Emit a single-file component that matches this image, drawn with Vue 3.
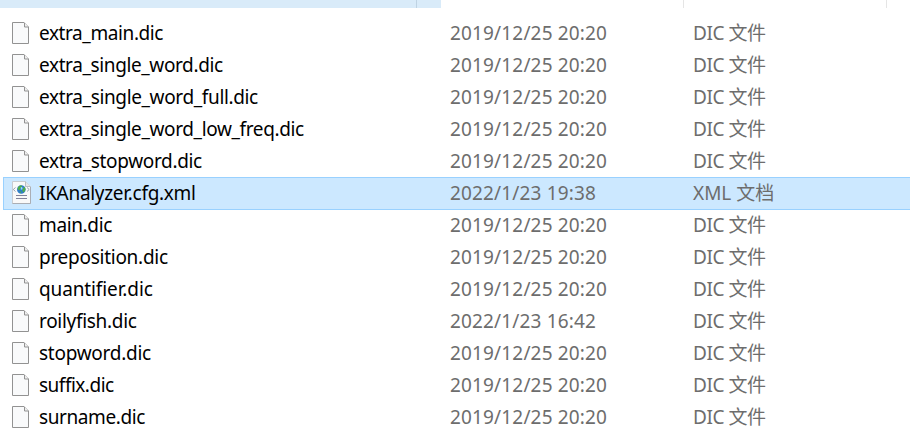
<script setup>
const dic = 'DIC 文件'
const stamp = '2019/12/25 20:20'
const files = [
  { name: 'extra_main.dic', date: stamp, type: dic, tracking: -0.4 },
  { name: 'extra_single_word.dic', date: stamp, type: dic, tracking: -0.38 },
  { name: 'extra_single_word_full.dic', date: stamp, type: dic, tracking: -0.36 },
  { name: 'extra_single_word_low_freq.dic', date: stamp, type: dic, tracking: -0.37 },
  { name: 'extra_stopword.dic', date: stamp, type: dic, tracking: -0.34 },
  { name: 'IKAnalyzer.cfg.xml', date: '2022/1/23 19:38', type: 'XML 文档', tracking: -0.3, selected: true },
  { name: 'main.dic', date: stamp, type: dic, tracking: -0.37 },
  { name: 'preposition.dic', date: stamp, type: dic, tracking: -0.27 },
  { name: 'quantifier.dic', date: stamp, type: dic, tracking: -0.12 },
  { name: 'roilyfish.dic', date: '2022/1/23 16:42', type: dic, tracking: -0.3 },
  { name: 'stopword.dic', date: stamp, type: dic, tracking: -0.27 },
  { name: 'suffix.dic', date: stamp, type: dic, tracking: -0.5 },
  { name: 'surname.dic', date: stamp, type: dic, tracking: -0.4 },
]
</script>

<template>
  <main class="explorer">
    <header class="columns">
      <span class="col-name"></span>
      <span class="col-gap"></span>
      <span class="col-date"></span>
      <span class="col-type"></span>
    </header>
    <ul class="files">
      <li v-for="f in files" :key="f.name" class="row" :class="{ selected: f.selected }">
        <svg v-if="f.selected" class="icon" width="21" height="25" viewBox="0 0 21 25">
          <path d="M1.500 1.500h13l5 5v17h-18z" fill="#f9f9f9" stroke="#c9ccd0" />
          <path d="M19.500 7v16.500h-18" fill="none" stroke="#abaeb4" />
          <path d="M14.500 1.500v5h5" fill="#e4e7ea" stroke="#bbbfc4" />
          <path d="M4.500 7.500 2.300 9.500l2.200 2M16 7.500l2.200 2-2.200 2" fill="none" stroke="#95a2b1" />
          <circle cx="10.300" cy="9.500" r="4.300" fill="#2f7dcc" />
          <path d="M6.800 7.500q1.500-2.200 3.500-2.200l.8 1.500-1.800 1.200-.5 2-2-.2zM12 8l2-1 .5 2.700-1.700 2.800-1.500-1.500zM8.300 11.300l2 .5-.5 1.600z" fill="#4fae48" />
          <path d="M9.800 7l1.500.3.200 2-1.700.5z" fill="#9adcf7" />
          <path d="M5 15.500h11M5 18.500h11" stroke="#82829a" />
        </svg>
        <svg v-else class="icon" width="20" height="24" viewBox="0 0 20 24">
          <path d="M2.500 1.500h11.500l4.500 4.500v16.500h-16z" fill="#f9fafb" stroke="#929292" />
          <path d="M14.500 1.800v4.200h4" fill="#efefef" stroke="#929292" />
        </svg>
        <span class="name" :style="{ letterSpacing: f.tracking + 'px' }">{{ f.name }}</span>
        <span class="date">{{ f.date }}</span>
        <span class="type">{{ f.type }}</span>
      </li>
    </ul>
  </main>
</template>

<style>
body {
  background: #fff;
}
</style>

<style scoped>
.explorer {
  width: 910px;
  height: 444px;
  overflow: hidden;
  background: #fff;
  font-family: 'Noto Sans', 'Noto Sans CJK SC', sans-serif;
  font-size: 19px;
}
.columns {
  display: flex;
  height: 8px;
}
.columns span {
  box-sizing: border-box;
  height: 8px;
}
.col-name {
  width: 417px;
  background: #d9ebf9;
  border-right: 1px solid #bfd3e3;
}
.col-gap {
  width: 24px;
  background: #d9ebf9;
}
.col-date {
  width: 243px;
  border-right: 1px solid #e5e5e5;
}
.col-type {
  width: 203px;
  border-right: 1px solid #e5e5e5;
}
.files {
  list-style: none;
  margin: 0;
  padding: 9px 0 0 3px;
}
.row {
  box-sizing: border-box;
  display: grid;
  grid-template-columns: 27px 409px 243px 1fr;
  height: 32px;
  padding-left: 9px;
  line-height: 32px;
  white-space: nowrap;
  color: #6d6d6d;
}
.selected {
  height: 33px;
  margin-bottom: -1px;
  padding-left: 8px;
  background: #cce8ff;
  border: 1px solid #99d1ff;
  border-right: 0;
  line-height: 30px;
}
.icon {
  display: block;
  margin: 4px 0 0 -2px;
}
.selected .icon {
  margin: 2px 0 0 -1px;
}
.name {
  color: #000;
}
.date {
  padding-left: 2px;
  letter-spacing: 0.16px;
}
.type {
  padding-left: 2px;
  letter-spacing: -0.45px;
}
.selected .type {
  letter-spacing: 0;
}
</style>
